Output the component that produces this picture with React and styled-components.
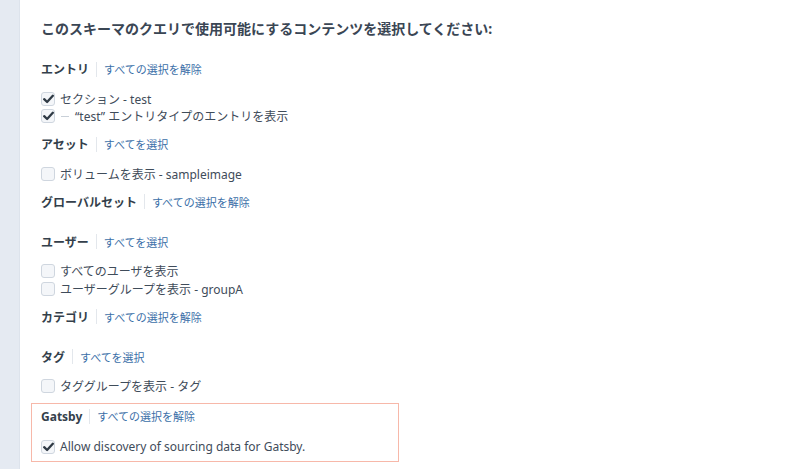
import React from "react";
import styled, { createGlobalStyle } from "styled-components";

const Global = createGlobalStyle`
  html, body { margin: 0; padding: 0; background: #ffffff; }
  body {
    font-family: "Noto Sans", "Noto Sans CJK JP", sans-serif;
    color: #3f4c5a;
    -webkit-font-smoothing: antialiased;
  }
`;

const Page = styled.div`
  display: flex;
  width: 800px;
  height: 469px;
  overflow: hidden;
`;

const Rail = styled.div`
  flex: 0 0 19px;
  background: #e5eaf2;
  border-right: 1px solid #dde3ec;
`;

const Main = styled.main`
  flex: 1;
  padding: 19px 0 0 21px;
`;

const Title = styled.h2`
  margin: 0 0 20px;
  font-size: 14px;
  line-height: 20px;
  font-weight: 700;
  color: #3a4654;
`;

const Section = styled.section`
  display: flex;
  flex-direction: column;
  width: ${(p) => (p.$highlight ? "348px" : "auto")};
  padding: ${(p) => (p.$highlight ? "2px 9px 5px" : "0 0 9px")};
  margin: ${(p) => (p.$highlight ? "-1px 0 0 -10px" : "0")};
  border: ${(p) => (p.$highlight ? "1px solid #f7b8a9" : "none")};
`;

const HeadingRow = styled.div`
  display: flex;
  align-items: center;
  height: 20px;
`;

const Heading = styled.span`
  font-size: 12px;
  font-weight: 700;
  color: #343f4b;
`;

const Divider = styled.span`
  width: 1px;
  height: 15px;
  margin: 0 7px;
  background: #e3e7ec;
`;

const Link = styled.a`
  font-size: 11px;
  color: #3b6fa8;
  text-decoration: none;
  cursor: pointer;
`;

const List = styled.div`
  display: flex;
  flex-direction: column;
  padding-top: ${(p) => (p.$extra ? "12px" : "11px")};
`;

const Item = styled.label`
  display: flex;
  align-items: center;
  height: 17.5px;
  font-size: 12px;
  color: #3f4c5a;
`;

const Box = styled.span`
  box-sizing: border-box;
  display: inline-flex;
  align-items: center;
  justify-content: center;
  width: 14px;
  height: 14px;
  margin-right: 5px;
  border: 1px solid #cfd6df;
  border-radius: 3px;
  background: #f4f6f9;
`;

const Dash = styled.span`
  width: 8px;
  height: 1px;
  margin: 0 6px 0 1px;
  background: #c9d0d8;
`;

const Check = () => (
  <svg width="11" height="10" viewBox="0 0 11 10">
    <path
      d="M1.2 5.2 L4.1 8 L9.8 1.8"
      fill="none"
      stroke="#2f3a45"
      strokeWidth="2.3"
      strokeLinecap="round"
      strokeLinejoin="round"
    />
  </svg>
);

const CheckItem = ({ checked, child, children }) => (
  <Item>
    <Box>{checked && <Check />}</Box>
    {child && <Dash />}
    {children}
  </Item>
);

const sections = [
  {
    title: "エントリ",
    link: "すべての選択を解除",
    items: [
      { label: "セクション - test", checked: true },
      { label: "“test” エントリタイプのエントリを表示", checked: true, child: true },
    ],
  },
  {
    title: "アセット",
    link: "すべてを選択",
    items: [{ label: "ボリュームを表示 - sampleimage" }],
  },
  { title: "グローバルセット", link: "すべての選択を解除", items: [] },
  {
    title: "ユーザー",
    link: "すべてを選択",
    items: [
      { label: "すべてのユーザを表示" },
      { label: "ユーザーグループを表示 - groupA" },
    ],
  },
  { title: "カテゴリ", link: "すべての選択を解除", items: [] },
  {
    title: "タグ",
    link: "すべてを選択",
    items: [{ label: "タググループを表示 - タグ" }],
  },
  {
    title: "Gatsby",
    link: "すべての選択を解除",
    highlight: true,
    items: [{ label: "Allow discovery of sourcing data for Gatsby.", checked: true }],
  },
];

export default function App() {
  return (
    <>
      <Global />
      <Page>
        <Rail />
        <Main>
          <Title>このスキーマのクエリで使用可能にするコンテンツを選択してください:</Title>
          {sections.map((s) => (
            <Section key={s.title} $highlight={s.highlight}>
              <HeadingRow>
                <Heading>{s.title}</Heading>
                <Divider />
                <Link>{s.link}</Link>
              </HeadingRow>
              <List $extra={s.highlight}>
                {s.items.map((it) => (
                  <CheckItem key={it.label} checked={it.checked} child={it.child}>
                    {it.label}
                  </CheckItem>
                ))}
              </List>
            </Section>
          ))}
        </Main>
      </Page>
    </>
  );
}
